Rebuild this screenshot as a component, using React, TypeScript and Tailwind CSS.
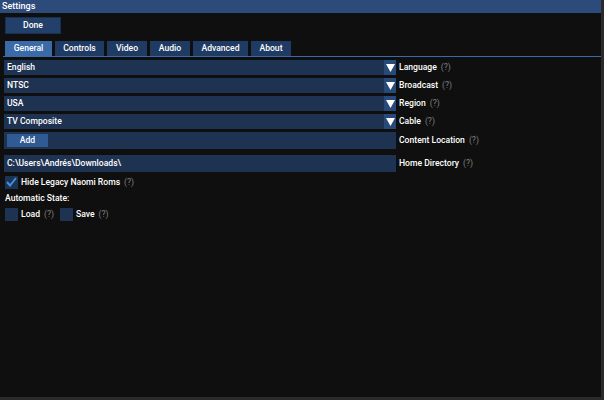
const font = { fontFamily: "Roboto, 'Liberation Sans', sans-serif" };

function Arrow() {
  return (
    <div className="w-[12px] h-full bg-[#284a78] flex items-center justify-center">
      <svg width="9" height="8" viewBox="0 0 9 8">
        <polygon points="0,0 9,0 4.5,8" fill="#ffffff" />
      </svg>
    </div>
  );
}

function Help() {
  return <span className="text-[#808080] font-normal ml-[4px]">(?)</span>;
}

function Combo({ value, label }: { value: string; label: string }) {
  return (
    <div className="flex items-center h-[15px]">
      <div className="w-[392px] h-full bg-[#1e3252] flex items-center justify-between">
        <span className="pl-[3px]">{value}</span>
        <Arrow />
      </div>
      <span className="ml-[3px]">{label}</span>
      <Help />
    </div>
  );
}

function Check({ on }: { on?: boolean }) {
  return (
    <div className="w-[13px] h-[13px] bg-[#1e3252] flex items-center justify-center">
      {on && (
        <svg width="11" height="10" viewBox="0 0 11 10">
          <polyline points="1,5 4,8.5 10,1" fill="none" stroke="#3d8fe8" strokeWidth="2" />
        </svg>
      )}
    </div>
  );
}

export default function App() {
  const tabs = [
    { name: "General", w: "w-[47px]" },
    { name: "Controls", w: "w-[49px]" },
    { name: "Video", w: "w-[40px]" },
    { name: "Audio", w: "w-[40px]" },
    { name: "Advanced", w: "w-[55px]" },
    { name: "About", w: "w-[40px]" },
  ];
  return (
    <div style={font} className="w-[604px] h-[400px] bg-[#0f0f0f] text-white text-[8.6px] font-medium flex flex-col border-r-[3px] border-b-[3px] border-[#2a2a2a] leading-none">
      <div className="h-[13px] bg-[#2c4a7a] flex items-center px-[2px] text-[9px]">Settings</div>
      <div className="pl-[5px] pt-[4px]">
        <div className="w-[56px] h-[17px] bg-[#23406a] border border-[#1a2f4f] flex items-center justify-center">Done</div>
      </div>
      <div className="flex gap-[3px] pt-[7px] border-b border-[#3b6aa6] mx-[3px] pl-[2px] w-[598px]">
        {tabs.map((t, i) => (
          <div
            key={t.name}
            className={`${t.w} h-[15px] flex items-center justify-center ${i === 0 ? "bg-[#3a6aa8]" : "bg-[#1f3b63]"}`}
          >
            {t.name}
          </div>
        ))}
      </div>
      <div className="pl-[4px] pt-[3px] flex flex-col gap-[3px]">
        <Combo value="English" label="Language" />
        <Combo value="NTSC" label="Broadcast" />
        <Combo value="USA" label="Region" />
        <Combo value="TV Composite" label="Cable" />
        <div className="flex items-center h-[17px]">
          <div className="w-[392px] h-full bg-[#1e3252] flex items-center pl-[3px]">
            <div className="w-[41px] h-[13px] bg-[#2f5a94] flex items-center justify-center">Add</div>
          </div>
          <span className="ml-[3px]">Content Location</span>
          <Help />
        </div>
        <div className="flex items-center h-[17px] mt-[3px]">
          <div className="w-[392px] h-full bg-[#1e3252] flex items-center pl-[3px]">C:\Users\Andrés\Downloads\</div>
          <span className="ml-[3px]">Home Directory</span>
          <Help />
        </div>
        <div className="flex items-center h-[14px] pl-[1px]">
          <Check on />
          <span className="ml-[3px]">Hide Legacy Naomi Roms</span>
          <Help />
        </div>
        <div className="h-[12px] flex items-center pl-[1px]">Automatic State:</div>
        <div className="flex items-center h-[14px] pl-[1px]">
          <Check />
          <span className="ml-[3px]">Load</span>
          <Help />
          <div className="ml-[6px]"><Check /></div>
          <span className="ml-[3px]">Save</span>
          <Help />
        </div>
      </div>
    </div>
  );
}
